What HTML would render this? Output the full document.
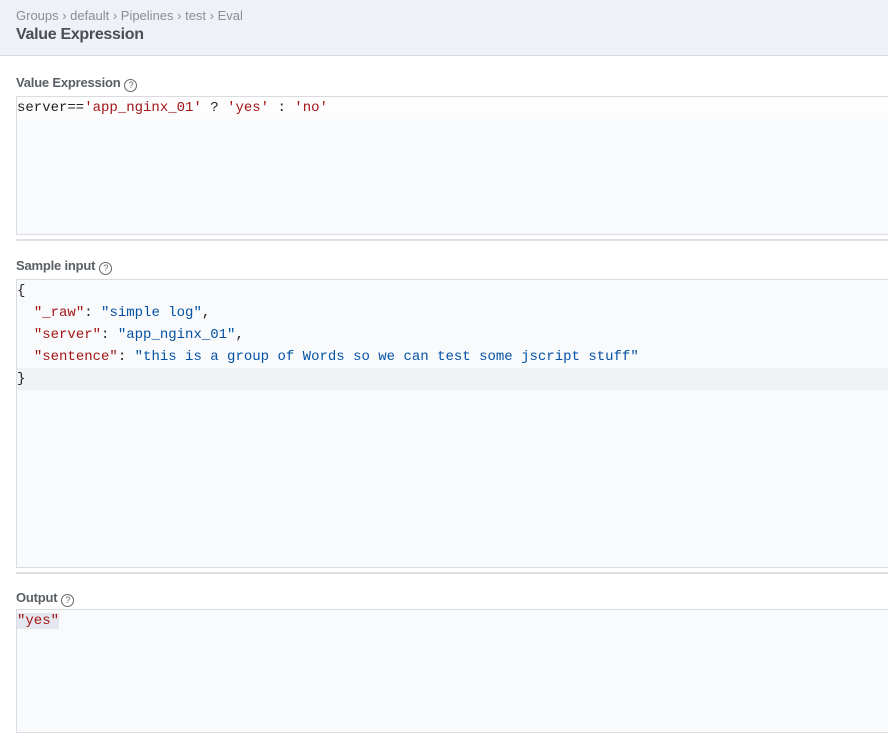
<!DOCTYPE html>
<html><head><style>
*{margin:0;padding:0;box-sizing:border-box}
body{width:888px;height:747px;background:#fff;font-family:"Liberation Sans",sans-serif;position:relative;overflow:hidden}
.hdr{position:absolute;left:0;top:0;width:888px;height:56px;background:#eef1f5;border-bottom:1px solid #d5d9df}
.bc{position:absolute;left:16px;top:8px;font-size:13px;color:#8a8f96}
.ttl{position:absolute;left:16px;top:26px;font-size:16px;color:#4a4f55;font-weight:bold;letter-spacing:-0.3px}
.lbl{position:absolute;left:16px;font-size:13px;color:#5a5f66;font-weight:bold;letter-spacing:-0.2px}
.q{display:inline-block;width:13px;height:13px;border:1px solid #666;border-radius:50%;font-size:9px;font-weight:normal;text-align:center;line-height:11px;vertical-align:-1px;margin-left:4px;color:#666}
.box{position:absolute;left:16px;width:880px;background:#f9fafc;border:1px solid #d9dce0;font-family:"Liberation Mono",monospace;font-size:14px;color:#222}
.ln{height:22px;line-height:22px;padding-left:0;white-space:pre}
.sep{position:absolute;left:16px;width:872px;height:2px;background:#dde1e6}
.r{color:#a31515}.b{color:#0451a5}
</style></head><body>
<div class="hdr"><div class="bc">Groups › default › Pipelines › test › Eval</div><div class="ttl">Value Expression</div></div>
<div class="lbl" style="top:75px">Value Expression<span class="q">?</span></div>
<div class="box" style="top:96px;height:139px"><div class="ln" style="background:#fdfdfe">server==<span class="r">'app_nginx_01'</span> ? <span class="r">'yes'</span> : <span class="r">'no'</span></div></div>
<div class="sep" style="top:239px"></div>
<div class="lbl" style="top:258px">Sample input<span class="q">?</span></div>
<div class="box" style="top:279px;height:289px">
<div class="ln">{</div>
<div class="ln">  <span class="r">"_raw"</span>: <span class="b">"simple log"</span>,</div>
<div class="ln">  <span class="r">"server"</span>: <span class="b">"app_nginx_01"</span>,</div>
<div class="ln">  <span class="r">"sentence"</span>: <span class="b">"this is a group of Words so we can test some jscript stuff"</span></div>
<div class="ln" style="background:#f0f2f5">}</div>
</div>
<div class="sep" style="top:572px"></div>
<div class="lbl" style="top:590px">Output<span class="q">?</span></div>
<div class="box" style="top:609px;height:124px"><div class="ln"><span class="r" style="background:#e4e8ee">"yes"</span></div></div>
</body></html>
